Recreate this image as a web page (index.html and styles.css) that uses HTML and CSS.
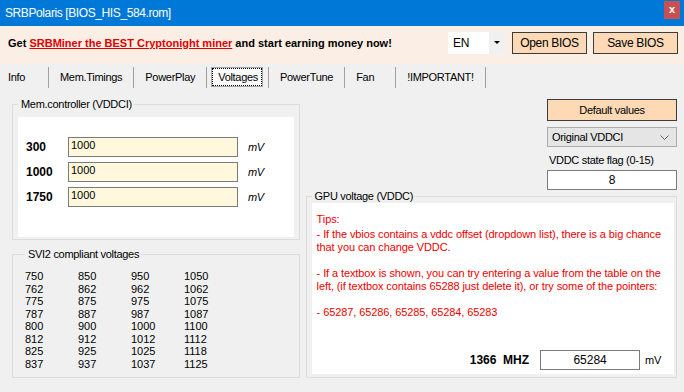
FILE: index.html
```html
<!DOCTYPE html>
<html lang="en">
<head>
  <meta charset="UTF-8">
  <meta name="viewport" content="width=device-width, initial-scale=1.0">
  <title>SRBPolaris</title>
  <link rel="stylesheet" href="styles.css">
</head>
<body>

<div class="titlebar">
  <span class="title">SRBPolaris [BIOS_HIS_584.rom]</span>
  <span class="close">x</span>
</div>

<div class="header">
  <p class="promo">Get <a href="#">SRBMiner the BEST Cryptonight miner</a> and start earning money now!</p>
  <div class="lang">
    <span class="lang-value">EN</span>
    <span class="lang-arrow"></span>
  </div>
  <button class="btn btn-open">Open BIOS</button>
  <button class="btn btn-save">Save BIOS</button>
</div>

<nav class="tabs">
  <span class="tab">Info</span>
  <span class="tab">Mem.Timings</span>
  <span class="tab">PowerPlay</span>
  <span class="tab active"><span class="focus">Voltages</span></span>
  <span class="tab">PowerTune</span>
  <span class="tab">Fan</span>
  <span class="tab">!IMPORTANT!</span>
</nav>

<main class="content">
  <div class="left">
    <fieldset class="group mem">
      <legend>Mem.controller (VDDCI)</legend>
      <div class="panel mem-panel">
        <div class="row"><b>300</b><input value="1000"><i>mV</i></div>
        <div class="row"><b>1000</b><input value="1000"><i>mV</i></div>
        <div class="row"><b>1750</b><input value="1000"><i>mV</i></div>
      </div>
    </fieldset>

    <fieldset class="group svi">
      <legend>SVI2 compliant voltages</legend>
      <div class="volt-grid">
        <span>750</span><span>762</span><span>775</span><span>787</span>
        <span>800</span><span>812</span><span>825</span><span>837</span>
        <span>850</span><span>862</span><span>875</span><span>887</span>
        <span>900</span><span>912</span><span>925</span><span>937</span>
        <span>950</span><span>962</span><span>975</span><span>987</span>
        <span>1000</span><span>1012</span><span>1025</span><span>1037</span>
        <span>1050</span><span>1062</span><span>1075</span><span>1087</span>
        <span>1100</span><span>1112</span><span>1118</span><span>1125</span>
      </div>
    </fieldset>
  </div>

  <div class="right">
    <button class="btn btn-default">Default values</button>
    <div class="select">
      <span>Original VDDCI</span>
      <svg width="9" height="5" viewBox="0 0 9 5"><path d="M0.5 0.5 L4.5 4.5 L8.5 0.5" fill="none" stroke="#606060"/></svg>
    </div>
    <label class="flag-label">VDDC state flag (0-15)</label>
    <input class="flag" value="8">

    <fieldset class="group gpu">
      <legend>GPU voltage (VDDC)</legend>
      <div class="panel gpu-panel">
        <div class="tips">
          <p class="tips-head">Tips:</p>
          <p>- If the vbios contains a vddc offset (dropdown list), there is a big chance<br>that you can change VDDC.</p>
          <p>- If a textbox is shown, you can try entering a value from the table on the<br>left, (if textbox contains 65288 just delete it), or try some of the pointers:</p>
          <p>- 65287, 65286, 65285, 65284, 65283</p>
        </div>
        <div class="clock">
          <b>1366&nbsp; MHZ</b>
          <input value="65284">
          <span>mV</span>
        </div>
      </div>
    </fieldset>
  </div>
</main>

</body>
</html>
```

FILE: styles.css
```css
* {
  margin: 0;
  padding: 0;
  box-sizing: border-box;
}
body {
  width: 684px;
  height: 392px;
  overflow: hidden;
  background: #f0f0f0;
  font-family: "Liberation Sans", Arial, sans-serif;
  font-size: 11px;
  letter-spacing: -0.3px;
  color: #000;
}
input, button {
  font-family: inherit;
  color: #000;
  outline: none;
}

/* window title */
.titlebar {
  height: 26px;
  background: #0078d7;
  color: #fff;
  display: flex;
  justify-content: space-between;
  padding: 0 4px 0 5px;
}
.title {
  font-size: 12px;
  letter-spacing: -0.4px;
  line-height: 26px;
}
.close {
  width: 16px;
  height: 18px;
  margin-top: 1px;
  background: #c75050;
  font-size: 11px;
  font-weight: bold;
  line-height: 16px;
  text-align: center;
  letter-spacing: 0;
}

/* promo / file bar */
.header {
  height: 38px;
  background: #fbefe5;
  display: flex;
  padding: 6px 6px 0 8px;
}
.promo {
  margin-right: auto;
  font-size: 11px;
  font-weight: bold;
  line-height: 22px;
  letter-spacing: 0;

  a {
    color: #e00000;
  }
}
.lang {
  width: 57px;
  height: 22px;
  background: #fff;
  display: flex;
  margin-right: 7px;
}
.lang-value {
  flex: 1;
  padding-left: 5px;
  font-size: 12px;
  line-height: 22px;
}
.lang-arrow {
  width: 16px;
  background: #f0f0f0;
  position: relative;

  &::after {
    content: "";
    position: absolute;
    left: 5px;
    top: 9px;
    border-left: 3px solid transparent;
    border-right: 3px solid transparent;
    border-top: 3px solid #000;
  }
}
.btn {
  height: 22px;
  background: #fdd9b5;
  border: 1px solid #3c3c3c;
  font-size: 12px;
  letter-spacing: -0.3px;
}
.btn-open {
  width: 75px;
  margin-right: 6px;
}
.btn-save {
  width: 85px;
}

/* tabs */
.tabs {
  height: 24px;
  display: flex;
  align-items: flex-end;
}
.tab {
  height: 21px;
  min-width: 51px;
  padding: 0 11px;
  border-right: 1px solid #a0a0a0;
  line-height: 20px;
  letter-spacing: -0.3px;

  &:first-child {
    min-width: 49px;
    padding-left: 8px;
  }
  &.active {
    padding: 0 5px 0 4px;
  }
}
.focus {
  display: block;
  height: 20px;
  padding: 0 4px 0 6px;
  border: 1px solid #a5a5a5;
  background: #fafafa;
  line-height: 18px;
  outline: 1px dotted #000;
  outline-offset: -2px;
}

/* content */
.content {
  display: flex;
  gap: 6px;
  padding: 0 7px 0 12px;
}
.left {
  width: 288px;
  padding-top: 10px;
}
.right {
  flex: 1;
  display: flex;
  flex-direction: column;
  align-items: flex-end;
  padding-top: 11px;
}

.group {
  border: 1px solid #dcdcdc;
  min-width: 0;

  legend {
    line-height: 12px;
    padding: 0 2px 0 3px;
  }
}
.panel {
  background: #fff;
}

.mem {
  padding: 7px 5px 2px 5px;
}
.mem-panel {
  height: 120px;
  padding: 20px 0 0 8px;
  display: flex;
  flex-direction: column;
  gap: 5px;
}
.row {
  height: 20px;
  display: flex;
  align-items: center;

  b {
    width: 42px;
    font-size: 12px;
    letter-spacing: 0;
  }
  input {
    width: 170px;
    height: 20px;
    padding: 0 2px 4px;
    background: #fff8dc;
    border: 1px solid #7a7a7a;
    font-size: 11px;
    letter-spacing: 0;
  }
  i {
    margin-left: 10px;
  }
}

.svi {
  margin-top: 8px;
  padding: 10px 0 7px 12px;
}
.volt-grid {
  display: grid;
  grid-template-rows: repeat(8, 12.5px);
  grid-auto-flow: column;
  grid-auto-columns: 53px;
  line-height: 12.5px;
  letter-spacing: 0;
}

.btn-default {
  width: 130px;
  font-size: 11px;
}
.select {
  width: 130px;
  height: 20px;
  margin-top: 6px;
  padding: 0 7px 0 4px;
  background: #e5e5e5;
  border: 1px solid #acacac;
  display: flex;
  justify-content: space-between;
  align-items: center;
}
.flag-label {
  width: 130px;
  margin-top: 6px;
  padding-left: 2px;
  line-height: 14px;
}
.flag {
  width: 130px;
  height: 20px;
  margin-top: 3px;
  background: #fff;
  border: 1px solid #7a7a7a;
  text-align: center;
  font-size: 12px;
  letter-spacing: 0;
}

.gpu {
  align-self: stretch;
  padding: 1px 2px 3px 5px;
}
.gpu-panel {
  height: 171px;
  padding: 10px 13px 4px 5px;
  display: flex;
  flex-direction: column;
  justify-content: space-between;
}
.tips {
  color: #f00000;
  line-height: 13px;
  letter-spacing: -0.1px;
  white-space: nowrap;

  p + p {
    margin-top: 13px;
  }
  .tips-head + p {
    margin-top: 2px;
  }
}
.clock {
  height: 20px;
  display: flex;
  justify-content: flex-end;
  align-items: center;

  b {
    margin-right: 11px;
    font-size: 12px;
    letter-spacing: 0;
  }
  input {
    width: 100px;
    height: 20px;
    border: 1px solid #7a7a7a;
    text-align: center;
    font-size: 12px;
    letter-spacing: 0;
  }
  span {
    margin-left: 5px;
  }
}
```
